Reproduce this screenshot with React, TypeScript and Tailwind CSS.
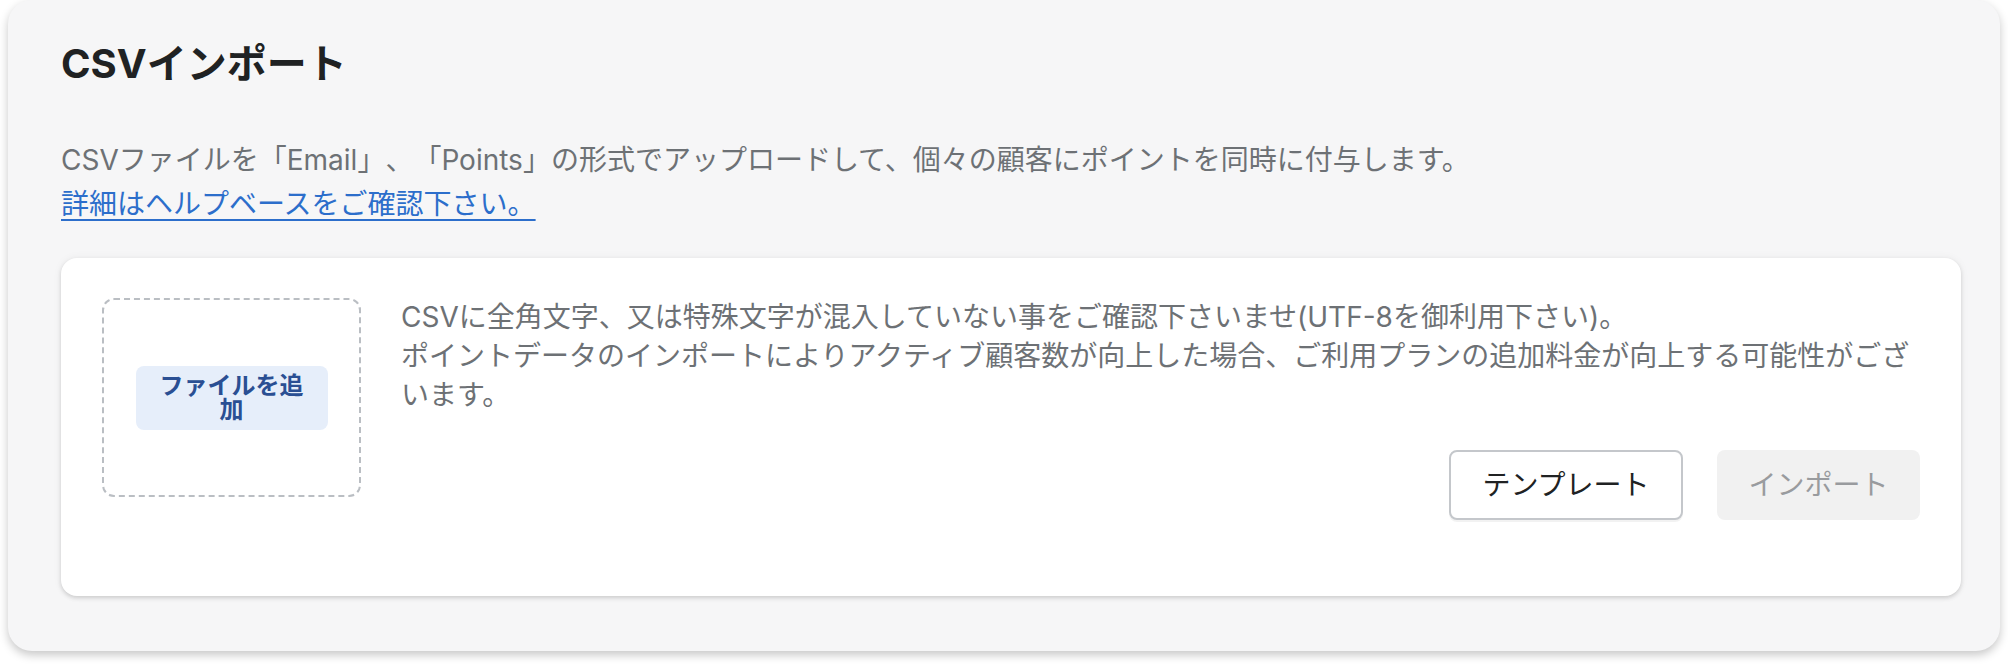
import React from "react";

export default function App() {
  return (
    <div className="w-[2008px] h-[668px] bg-white overflow-hidden [text-spacing-trim:space-all] font-['Inter','Noto_Sans_CJK_JP',sans-serif]">
      <div className="ml-[8px] w-[1992px] rounded-[24px] bg-[#f6f6f7] pt-[40px] pb-[55px] pl-[53px] pr-[39px] shadow-[0_4px_10px_rgba(0,0,0,0.22)]">
        <h1 className="text-[40px] leading-[48px] font-bold text-[#202223]">CSVインポート</h1>
        <div className="mt-[50px] text-[28px] leading-[44px] text-[#6d7175]">
          <p>CSVファイルを「Email」、「Points」の形式でアップロードして、個々の顧客にポイントを同時に付与します。</p>
          <a href="#" className="text-[#2c6ecb] underline decoration-[2px] underline-offset-[5px]">
            詳細はヘルプベースをご確認下さい。
          </a>
        </div>
        <div className="mt-[32px] rounded-[16px] bg-white pt-[40px] pb-[76px] px-[41px] shadow-[0_0_10px_rgba(23,24,24,0.05),0_2px_4px_rgba(0,0,0,0.15)]">
          <div className="flex items-start gap-[40px]">
            <div className="w-[259px] h-[199px] shrink-0 rounded-[12px] border-2 border-dashed border-[#babec3] flex items-center justify-center">
              <button className="w-[192px] h-[64px] px-[16px] rounded-[8px] bg-[#e6eefa] text-[#2a4f93] text-[24px] leading-[24px] font-bold">
                ファイルを追加
              </button>
            </div>
            <div className="flex-1 min-w-0">
              <p className="text-[28px] leading-[39px] text-[#6d7175]">
                CSVに全角文字、又は特殊文字が混入していない事をご確認下さいませ(UTF-8を御利用下さい)。
                <br />
                ポイントデータのインポートによりアクティブ顧客数が向上した場合、ご利用プランの追加料金が向上する可能性がございます。
              </p>
              <div className="mt-[35px] flex justify-end gap-[34px]">
                <button className="w-[234px] h-[70px] rounded-[8px] border-2 border-[#c4c7cb] bg-white text-[28px] text-[#202223] shadow-[0_2px_0_rgba(0,0,0,0.05)]">
                  テンプレート
                </button>
                <button className="w-[203px] h-[70px] rounded-[8px] bg-[#f1f1f1] text-[28px] text-[#999b9e]">
                  インポート
                </button>
              </div>
            </div>
          </div>
        </div>
      </div>
    </div>
  );
}
